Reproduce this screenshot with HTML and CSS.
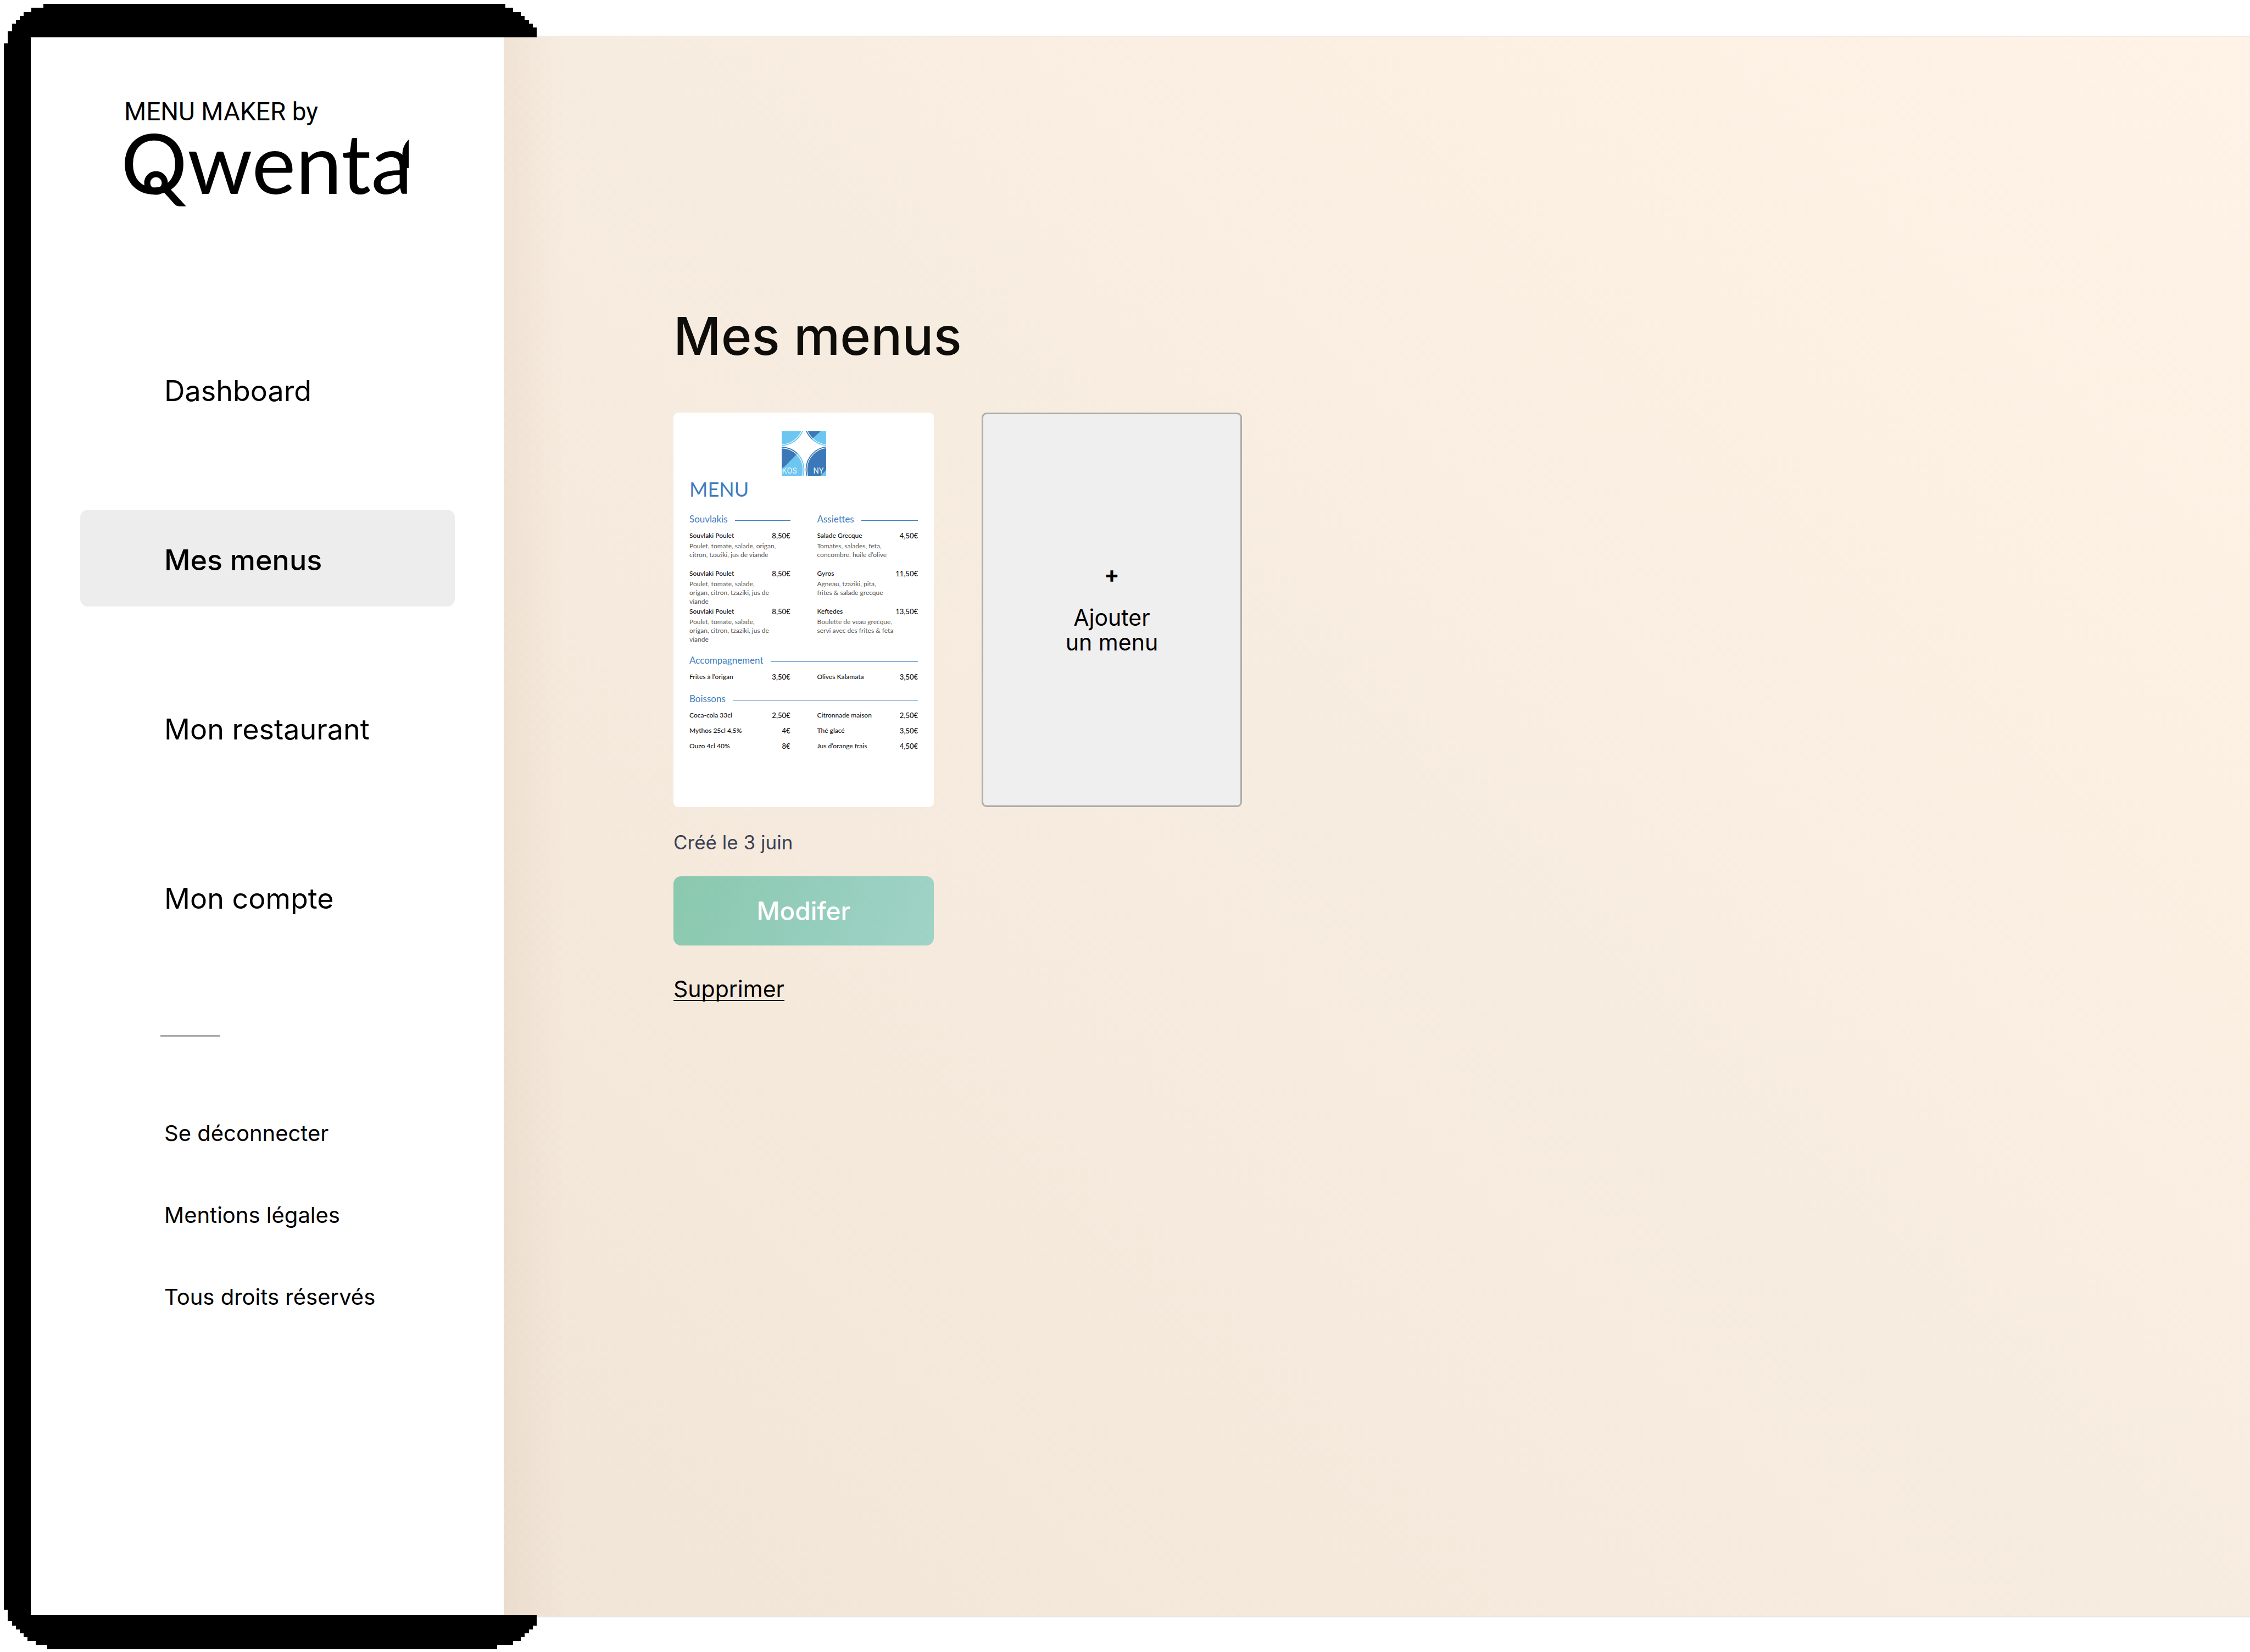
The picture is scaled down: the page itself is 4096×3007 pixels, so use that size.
FILE: index.html
```html
<!DOCTYPE html>
<html lang="fr">
<head>
  <meta charset="utf-8">
  <meta name="viewport" content="width=device-width, initial-scale=1">
  <title>Menu Maker by Qwenta – Mes menus</title>
  <link rel="stylesheet" href="styles.css">
</head>
<body>
  <div class="app">
    <svg class="frame" viewBox="0 0 136 418.75" preserveAspectRatio="none" shape-rendering="crispEdges" aria-hidden="true">
      <path fill-rule="evenodd" d="M11 1H128V2H130V3H132V4H133V5H134V6H135V7H136V412H135V413H134V414H133V415H132V416H130V417H126V418H12V417H9V416H7V415H6V414H5V413H4V412H3V411H2V408H1V11H2V8H3V6H4V5H5V4H6V3H8V2H11ZM7.8 9.4V409.4H136V9.4Z"/>
    </svg>

    <aside class="sidebar">
      <svg class="logo" viewBox="0 0 530 190" role="img" aria-label="Menu Maker by Qwenta">
        <text class="logo-line" x="0" y="43">MENU MAKER by</text>
        <text class="logo-name" x="-6" y="177">Qwenta</text>
        <circle cx="58" cy="157" r="16" fill="none" stroke="#000" stroke-width="11"/>
        <path d="M518 78Q504 92 507 112V130H518Z"/>
      </svg>

      <nav class="nav" aria-label="Navigation principale">
        <a class="nav-link" href="#dashboard">Dashboard</a>
        <a class="nav-link is-active" href="#menus" aria-current="page">Mes menus</a>
        <a class="nav-link" href="#restaurant">Mon restaurant</a>
        <a class="nav-link" href="#compte">Mon compte</a>
      </nav>

      <hr class="divider">

      <nav class="subnav" aria-label="Liens secondaires">
        <a href="#deconnexion">Se déconnecter</a>
        <a href="#mentions">Mentions légales</a>
        <a href="#droits">Tous droits réservés</a>
      </nav>
    </aside>

    <main class="content">
      <h1 class="title">Mes menus</h1>

      <div class="menus">
        <article class="menu">
          <div class="sheet">
            <svg class="sheet-logo" viewBox="0 0 270 270" role="img" aria-label="Kos NY">
              <defs>
                <clipPath id="bl"><circle cx="0" cy="232" r="138"/></clipPath>
                <clipPath id="br"><circle cx="285" cy="232" r="140"/></clipPath>
                <clipPath id="tr"><circle cx="285" cy="-60" r="150"/></clipPath>
              </defs>
              <rect width="270" height="270" fill="#fff"/>
              <circle cx="-8" cy="-60" r="150" fill="#6cc6f0"/>
              <circle cx="-8" cy="-60" r="142" fill="none" stroke="#fff" stroke-width="4"/>
              <g clip-path="url(#tr)">
                <rect x="130" width="140" height="100" fill="#6cc6f0"/>
                <path d="M130 0V80H150L185 45L236 0Z" fill="#3a78b8"/>
              </g>
              <circle cx="285" cy="-60" r="142" fill="none" stroke="#fff" stroke-width="4"/>
              <g clip-path="url(#bl)">
                <rect y="90" width="150" height="180" fill="#6cc6f0"/>
                <path d="M0 90H140L0 232Z" fill="#3a78b8"/>
              </g>
              <circle cx="0" cy="232" r="130" fill="none" stroke="#fff" stroke-width="4"/>
              <g clip-path="url(#br)">
                <rect x="140" y="90" width="130" height="180" fill="#3a78b8"/>
                <path d="M236 270L270 236V270Z" fill="#6cc6f0"/>
              </g>
              <circle cx="285" cy="232" r="132" fill="none" stroke="#fff" stroke-width="4"/>
              <text x="2" y="256">KOS</text>
              <text x="192" y="256">NY</text>
            </svg>

            <h2 class="sheet-title">MENU</h2>

            <div class="columns">
              <section>
                <h3 class="heading">Souvlakis</h3>
                <ul class="dishes">
                  <li class="dish">
                    <p class="item"><span>Souvlaki Poulet</span><span class="price">8,50€</span></p>
                    <p class="desc">Poulet, tomate, salade, origan,<br>citron, tzaziki, jus de viande</p>
                  </li>
                  <li class="dish">
                    <p class="item"><span>Souvlaki Poulet</span><span class="price">8,50€</span></p>
                    <p class="desc">Poulet, tomate, salade,<br>origan, citron, tzaziki, jus de<br>viande</p>
                  </li>
                  <li class="dish">
                    <p class="item"><span>Souvlaki Poulet</span><span class="price">8,50€</span></p>
                    <p class="desc">Poulet, tomate, salade,<br>origan, citron, tzaziki, jus de<br>viande</p>
                  </li>
                </ul>
              </section>
              <section>
                <h3 class="heading">Assiettes</h3>
                <ul class="dishes">
                  <li class="dish">
                    <p class="item"><span>Salade Grecque</span><span class="price">4,50€</span></p>
                    <p class="desc">Tomates, salades, feta,<br>concombre, huile d’olive</p>
                  </li>
                  <li class="dish">
                    <p class="item"><span>Gyros</span><span class="price">11,50€</span></p>
                    <p class="desc">Agneau, tzaziki, pita,<br>frites &amp; salade grecque</p>
                  </li>
                  <li class="dish">
                    <p class="item"><span>Keftedes</span><span class="price">13,50€</span></p>
                    <p class="desc">Boulette de veau grecque,<br>servi avec des frites &amp; feta</p>
                  </li>
                </ul>
              </section>
            </div>

            <section class="extras">
              <h3 class="heading">Accompagnement</h3>
              <ul class="grid">
                <li class="item"><span>Frites à l’origan</span><span class="price">3,50€</span></li>
                <li class="item"><span>Olives Kalamata</span><span class="price">3,50€</span></li>
              </ul>
            </section>

            <section class="extras">
              <h3 class="heading">Boissons</h3>
              <ul class="grid">
                <li class="item"><span>Coca-cola 33cl</span><span class="price">2,50€</span></li>
                <li class="item"><span>Citronnade maison</span><span class="price">2,50€</span></li>
                <li class="item"><span>Mythos 25cl 4,5%</span><span class="price">4€</span></li>
                <li class="item"><span>Thé glacé</span><span class="price">3,50€</span></li>
                <li class="item"><span>Ouzo 4cl 40%</span><span class="price">8€</span></li>
                <li class="item"><span>Jus d’orange frais</span><span class="price">4,50€</span></li>
              </ul>
            </section>
          </div>

          <p class="created">Créé le 3 juin</p>
          <button class="edit" type="button">Modifer</button>
          <a class="delete" href="#supprimer">Supprimer</a>
        </article>

        <button class="add" type="button">
          <span class="plus">+</span>
          <span>Ajouter<br>un menu</span>
        </button>
      </div>
    </main>
  </div>
</body>
</html>
```
FILE: styles.css
```css
*,
*::before,
*::after {
  box-sizing: border-box;
}

body {
  margin: 0;
  background: #fff;
  color: #000;
  font-family: Inter, "Liberation Sans", sans-serif;
}

h1, h2, h3, p, ul {
  margin: 0;
  padding: 0;
  font-weight: 400;
}

ul {
  list-style: none;
}

a {
  color: inherit;
  text-decoration: none;
}

button {
  padding: 0;
  border: 0;
  color: inherit;
  font: inherit;
}

/* Shell */
.app {
  position: relative;
  display: flex;
  min-height: 100vh;
  padding: 65px 0 63px 56px;
}

.frame {
  position: absolute;
  z-index: 1;
  top: 0;
  left: 0;
  width: 977px;
  height: 100%;
  pointer-events: none;
}

/* Sidebar */
.sidebar {
  flex: 0 0 861px;
  margin: 2px 0 4px;
  padding: 109px 89px 0 90px;
  background: #fff;
}

.logo {
  display: block;
  width: 530px;
  height: 190px;
  margin-left: 80px;
  overflow: visible;
}

.logo-line {
  font: 400 46px Roboto, sans-serif;
}

.logo-name {
  font: 400 151px Lato, sans-serif;
}

.nav {
  display: flex;
  flex-direction: column;
  gap: 132px;
  margin-top: 254px;
}

.nav-link {
  padding: 60px 0 52px 153px;
  border-radius: 14px;
  font-size: 52px;
  line-height: 64px;
}

.nav-link.is-active {
  background: #ededed;
  font-weight: 500;
}

.divider {
  width: 109px;
  height: 3px;
  margin: 164px 0 0 146px;
  border: 0;
  background: #a9a9a9;
}

.subnav {
  display: flex;
  flex-direction: column;
  align-items: flex-start;
  gap: 99px;
  margin: 151px 0 0 153px;
  font-size: 40px;
  line-height: 50px;
}

/* Content */
.content {
  flex: 1;
  padding: 483px 309px 100px;
  border-top: 2px solid #efebe8;
  border-bottom: 3px solid #e7e7e7;
  background:
    linear-gradient(90deg, rgba(150, 120, 80, .08), rgba(150, 120, 80, .03) 60px, transparent 110px),
    linear-gradient(45deg, #f1e5d8, #f5e9dc 25%, #f7ece0 50%, #fcf0e3 75%, #fff3e7);
}

.title {
  color: #0e0d0a;
  font-size: 95px;
  font-weight: 500;
  line-height: 124px;
}

.menus {
  display: flex;
  align-items: flex-start;
  gap: 87px;
  margin-top: 77px;
}

.menu {
  display: flex;
  flex-direction: column;
  align-items: flex-start;
  width: 474px;
}

.created {
  margin-top: 42px;
  color: #3d4152;
  font-size: 35px;
  line-height: 44px;
}

.edit {
  width: 100%;
  height: 126px;
  margin-top: 40px;
  border-radius: 14px;
  background: linear-gradient(110deg, #8ac9ae, #94cdbb 50%, #9fd3c7);
  color: #fff;
  font-size: 46px;
  font-weight: 500;
}

.delete {
  margin-top: 54px;
  font-size: 41px;
  line-height: 50px;
  text-decoration: underline;
  text-decoration-skip-ink: none;
  text-decoration-thickness: 2px;
  text-underline-offset: 5px;
}

.add {
  display: flex;
  flex-direction: column;
  align-items: center;
  justify-content: center;
  gap: 34px;
  width: 474px;
  height: 718px;
  padding-bottom: 6px;
  border: 3px solid #adadaa;
  border-radius: 9px;
  background: #efefef;
  font-size: 41px;
  line-height: 45px;
}

.plus {
  font-weight: 700;
}

/* Menu preview sheet */
.sheet {
  width: 100%;
  height: 718px;
  padding: 34px 29px 0;
  border-radius: 9px;
  background: #fff;
  font-family: Lato, "Open Sans", sans-serif;
}

.sheet-logo {
  display: block;
  width: 81px;
  height: 81px;
  margin: 0 auto;
  overflow: hidden;
}

.sheet-logo text {
  fill: #e8f4fc;
  font: 48px Roboto, sans-serif;
}

.sheet-title {
  margin-top: 6px;
  color: #3f7dc0;
  font-size: 36px;
  line-height: 36px;
}

.columns {
  display: grid;
  grid-template-columns: 1fr 1fr;
  column-gap: 49px;
  margin-top: 25px;
}

.heading {
  display: flex;
  align-items: center;
  gap: 13px;
  margin-bottom: 8px;
  color: #3f7dc0;
  font-size: 17px;
  line-height: 24px;
}

.heading::after {
  content: "";
  flex: 1;
  height: 1px;
  margin-top: 4px;
  background: #3f7dc0;
}

.dish {
  min-height: 69px;
}

.item {
  display: flex;
  justify-content: space-between;
  color: #111;
  font-size: 12px;
  font-weight: 500;
  line-height: 20px;
}

.price {
  font-size: 13px;
}

.desc {
  margin-top: 1px;
  color: #555;
  font-size: 12px;
  line-height: 16px;
}

.extras {
  margin-top: 18px;
}

.grid {
  display: grid;
  grid-template-columns: 1fr 1fr;
  gap: 8px 49px;
}
```
